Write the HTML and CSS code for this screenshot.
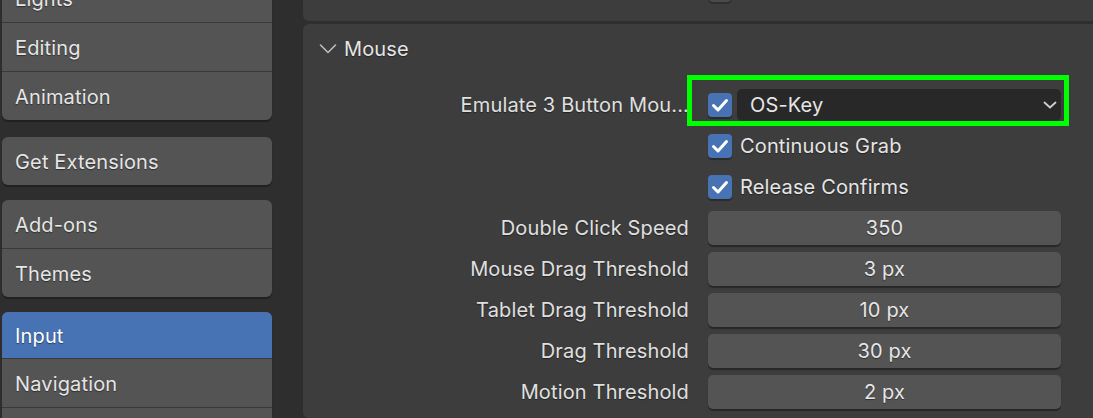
FILE: index.html
```html
<!DOCTYPE html>
<html>
<head>
<meta charset="utf-8">
<link rel="stylesheet" href="styles.css">
</head>
<body>
<nav class="nav">
  <div class="group first">
    <div class="item">Lights</div>
    <div class="item">Editing</div>
    <div class="item">Animation</div>
  </div>
  <div class="group">
    <div class="item">Get Extensions</div>
  </div>
  <div class="group">
    <div class="item">Add-ons</div>
    <div class="item">Themes</div>
  </div>
  <div class="group">
    <div class="item active">Input</div>
    <div class="item">Navigation</div>
    <div class="item"></div>
  </div>
</nav>
<main class="main">
  <section class="panel prev">
    <div class="prev-row"><span class="stub"></span></div>
  </section>
  <section class="panel mouse">
    <header class="phead">
      <svg class="pchev" width="18" height="12" viewBox="0 0 18 12"><path d="M1.5 2 L9 9.5 L16.5 2" fill="none" stroke="#bdbdbd" stroke-width="1.6" stroke-linecap="round" stroke-linejoin="round"/></svg>
      <span>Mouse</span>
    </header>
    <div class="rows">
      <div class="lbl">Emulate 3 Button Mou...</div>
      <div class="ctl">
        <span class="cb"><svg width="24" height="24" viewBox="0 0 24 24"><path d="M5.5 12.5 L10 17 L18.5 7.5" fill="none" stroke="#fff" stroke-width="3" stroke-linecap="round" stroke-linejoin="round"/></svg></span>
        <div class="dd"><span>OS-Key</span><svg width="14" height="10" viewBox="0 0 14 10"><path d="M1.5 2.5 L7 7.5 L12.5 2.5" fill="none" stroke="#d0d0d0" stroke-width="1.8" stroke-linecap="round" stroke-linejoin="round"/></svg></div>
      </div>

      <div class="lbl"></div>
      <div class="ctl">
        <span class="cb"><svg width="24" height="24" viewBox="0 0 24 24"><path d="M5.5 12.5 L10 17 L18.5 7.5" fill="none" stroke="#fff" stroke-width="3" stroke-linecap="round" stroke-linejoin="round"/></svg></span>
        <span class="cbl">Continuous Grab</span>
      </div>

      <div class="lbl"></div>
      <div class="ctl">
        <span class="cb"><svg width="24" height="24" viewBox="0 0 24 24"><path d="M5.5 12.5 L10 17 L18.5 7.5" fill="none" stroke="#fff" stroke-width="3" stroke-linecap="round" stroke-linejoin="round"/></svg></span>
        <span class="cbl">Release Confirms</span>
      </div>

      <div class="lbl">Double Click Speed</div>
      <div class="ctl"><div class="num">350</div></div>

      <div class="lbl">Mouse Drag Threshold</div>
      <div class="ctl"><div class="num">3 px</div></div>

      <div class="lbl">Tablet Drag Threshold</div>
      <div class="ctl"><div class="num">10 px</div></div>

      <div class="lbl">Drag Threshold</div>
      <div class="ctl"><div class="num">30 px</div></div>

      <div class="lbl">Motion Threshold</div>
      <div class="ctl"><div class="num">2 px</div></div>
    </div>
  </section>
</main>
<div class="highlight"></div>
</body>
</html>
```
FILE: styles.css
```css
html, body {
  margin: 0;
  padding: 0;
}
body {
  width: 1093px;
  height: 418px;
  overflow: hidden;
  background: #2e2e2e;
  display: flex;
  font-family: Inter, "Noto Sans", sans-serif;
  font-size: 20px;
  letter-spacing: 0.15px;
  color: #e6e6e6;
  position: relative;
}
.nav {
  width: 270px;
  padding-left: 2px;
  flex: none;
  display: flex;
  flex-direction: column;
  gap: 15px;
}
.group {
  background: #545454;
  border-radius: 6px;
  overflow: hidden;
  box-shadow: 0 2px 1px rgba(0,0,0,0.3);
  flex: none;
}
.group.first {
  margin-top: -26px;
  margin-bottom: 2px;
}
.item {
  height: 48px;
  display: flex;
  align-items: center;
  padding-left: 13px;
  padding-top: 1px;
  box-sizing: border-box;
  text-shadow: 0 1px 1px rgba(0,0,0,0.45);
}
.item + .item {
  border-top: 1px solid #393939;
  height: 49px;
}
.item.active {
  background: #4772b3;
  height: 46px;
  color: #fff;
}
.main {
  flex: 1;
  padding-left: 31px;
  display: flex;
  flex-direction: column;
  gap: 3px;
  min-width: 0;
}
.panel {
  background: #3d3d3d;
  border-radius: 6px 0 0 6px;
}
.prev {
  margin-top: -6px;
  height: 27px;
  overflow: hidden;
}
.prev-row {
  padding-left: 405px;
}
.stub {
  display: block;
  width: 24px;
  height: 24px;
  margin-top: -16px;
  background: #4a4a4a;
  border-radius: 5px;
  box-shadow: 0 2px 0 #2f2f2f;
}
.mouse {
  flex: 1;
}
.phead {
  height: 49px;
  display: flex;
  align-items: center;
  padding-left: 16px;
  gap: 7px;
  text-shadow: 0 1px 1px rgba(0,0,0,0.45);
}
.pchev {
  display: block;
}
.rows {
  margin-top: 11px;
  display: grid;
  grid-template-columns: 386px 353px;
  grid-auto-rows: 41px;
  column-gap: 19px;
}
.lbl {
  text-align: right;
  align-self: center;
  white-space: nowrap;
  color: #e0e0e0;
  text-shadow: 0 1px 1px rgba(0,0,0,0.45);
}
.ctl {
  display: flex;
  align-items: center;
}
.cb {
  width: 24px;
  height: 24px;
  border-radius: 4px;
  background: #4772b3;
  box-shadow: 0 2px 1px rgba(0,0,0,0.3);
  flex: none;
}
.cb svg {
  display: block;
}
.cbl {
  margin-left: 8px;
  text-shadow: 0 1px 1px rgba(0,0,0,0.45);
}
.dd {
  margin-left: 5px;
  flex: 1;
  height: 32px;
  background: #282828;
  border-radius: 5px;
  display: flex;
  align-items: center;
  justify-content: space-between;
  padding: 0 4px 0 13px;
}
.dd svg {
  display: block;
}
.num {
  width: 100%;
  height: 34px;
  background: #545454;
  border-radius: 5px;
  box-shadow: 0 2px 1px rgba(0,0,0,0.35);
  display: flex;
  align-items: center;
  justify-content: center;
  text-shadow: 0 1px 1px rgba(0,0,0,0.45);
}
.highlight {
  position: absolute;
  left: 687px;
  top: 75px;
  width: 372px;
  height: 41px;
  border: 5px solid #00ff00;
  pointer-events: none;
}
```
